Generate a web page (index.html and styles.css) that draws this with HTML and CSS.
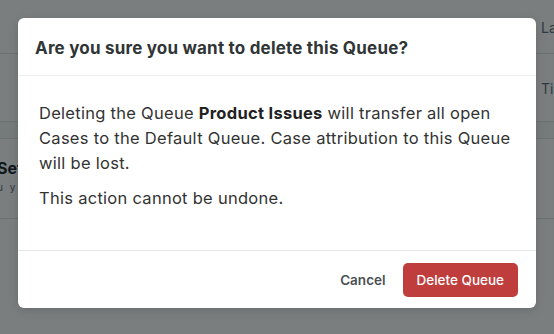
FILE: index.html
```html
<!DOCTYPE html>
<html lang="en">
<head>
  <meta charset="UTF-8" />
  <meta name="viewport" content="width=device-width, initial-scale=1.0" />
  <title>Queues</title>
  <link rel="stylesheet" href="styles.css">
</head>
<body>
  <!-- page behind the dialog -->
  <div class="page">
    <div class="row row-top">
      <span class="cell-left"></span>
      <span class="cell-right">Last updated</span>
    </div>
    <div class="row row-mid">
      <span class="cell-left"></span>
      <span class="cell-right">Time</span>
    </div>
    <div class="band"></div>
    <div class="row row-settings">
      <div class="cell-left">
        <div class="settings-title">Settings</div>
        <div class="settings-sub">u y</div>
      </div>
    </div>
  </div>

  <div class="overlay"></div>

  <!-- Modal -->
  <div class="modal">
    <div class="modal-header">
      <h2>Are you sure you want to delete this Queue?</h2>
    </div>
    <div class="modal-body">
      <p>Deleting the Queue <strong>Product Issues</strong> will transfer all open Cases to the Default Queue. Case attribution to this Queue will be lost.</p>
      <p>This action cannot be undone.</p>
    </div>
    <div class="modal-footer">
      <button class="btn btn-cancel">Cancel</button>
      <button class="btn btn-danger">Delete Queue</button>
    </div>
  </div>
</body>
</html>
```

FILE: styles.css
```css
* { margin: 0; padding: 0; box-sizing: border-box; }
body, html { height: 100%; font-family: 'Inter', 'Liberation Sans', sans-serif; }

body {
  background-color: #ffffff;
  overflow: hidden;
}

/* PAGE BEHIND */
.page {
  height: 100%;
  color: #555;
  font-size: 14px;
}

.row {
  display: flex;
  justify-content: space-between;
  border-bottom: 1px solid #dfe3e8;
}

.row-top { height: 54px; padding-top: 19px; }
.row-mid { height: 68px; padding-top: 26px; }

.cell-right {
  width: 13px;
  overflow: hidden;
  white-space: nowrap;
  color: #637381;
}

.band {
  height: 17px;
  background-color: #f4f6f8;
  border-bottom: 1px solid #dfe3e8;
}

.row-settings {
  height: 80px;
  padding-top: 19px;
}

.row-settings .cell-left {
  margin-left: -3px;
  width: 21px;
  overflow: hidden;
  white-space: nowrap;
}

.settings-title {
  font-size: 16px;
  font-weight: bold;
  color: #212b36;
}

.settings-sub {
  margin-top: 3px;
  font-size: 10px;
  letter-spacing: 2px;
  color: #637381;
}

.overlay {
  background-color: rgba(0, 8, 8, 0.52);
  position: absolute;
  top: 0; left: 0;
  width: 100%; height: 100%;
}

/* MODAL */
.modal {
  position: absolute;
  top: 18px;
  left: 18px;
  width: 518px;
  height: 290px;
  background-color: #fff;
  border-radius: 6px;
  box-shadow: 0 2px 10px rgba(0, 0, 0, 0.15);
  display: flex;
  flex-direction: column;
  color: #333;
}

.modal-header {
  height: 58px;
  padding: 3px 17px 0;
  display: flex;
  align-items: center;
  border-bottom: 1px solid #eceeef;
}

.modal-header h2 {
  font-size: 17px;
  font-weight: 700;
  letter-spacing: 0.2px;
  color: #303536;
}

.modal-body {
  flex: 1;
  padding: 25px 21px 0;
  font-size: 16.5px;
  letter-spacing: 0.28px;
  line-height: 25px;
  border-bottom: 1px solid #e4e6e7;
}

.modal-body p + p {
  margin-top: 10px;
}

.modal-body strong {
  font-weight: 700;
  color: #222;
}

.modal-footer {
  height: 57px;
  padding: 0 18px;
  display: flex;
  align-items: center;
  justify-content: flex-end;
  gap: 17px;
}

.btn {
  font-family: inherit;
  font-size: 13.5px;
  font-weight: 500;
  border: none;
  cursor: pointer;
}

.btn-cancel {
  background: none;
  color: #4a5053;
  font-weight: 600;
}

.btn-danger {
  height: 34px;
  padding: 0 14px;
  background-color: #bf3e3d;
  color: #fff;
  border-radius: 5px;
}
```
